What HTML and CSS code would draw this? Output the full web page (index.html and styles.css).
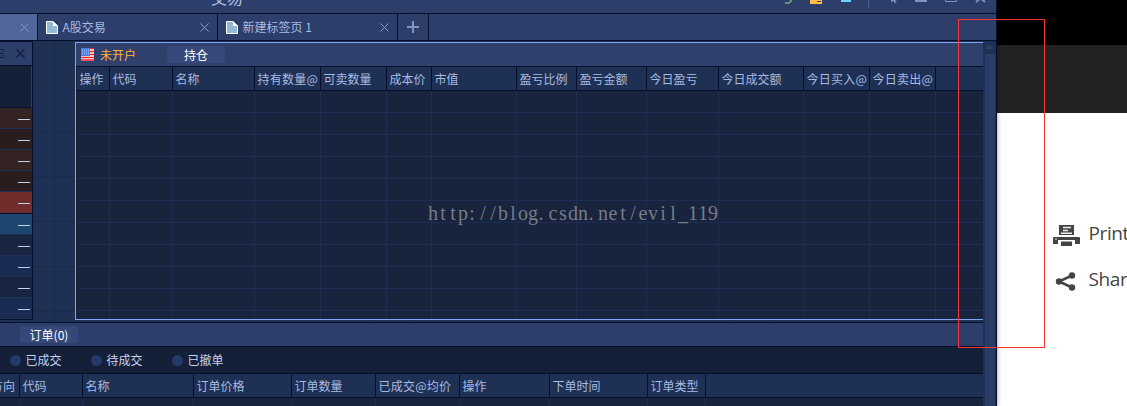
FILE: index.html
```html
<!DOCTYPE html>
<html lang="zh-CN">
<head>
<meta charset="utf-8">
<title>交易</title>
<link rel="stylesheet" href="styles.css">
</head>
<body>
<div class="screen">
  <div class="app">
    <header class="titlebar">
      <span class="app-title">交易</span>
      <svg class="window-tools" width="220" height="10" viewBox="770 0 220 10">
        <path d="M785 3h4l2-2v-1" fill="none" stroke="#6ab77d" stroke-width="1.5"/>
        <path d="M810 0h12v4h-12z" fill="#ffbd45"/><path d="M817 1.500h4" stroke="#2d406b"/>
        <path d="M841 0h10v1.500q0 .5-1 .5h-8q-1 0-1-.5z" fill="#6fcff8"/>
        <path d="M868.500 0v8" stroke="#485b89"/>
        <path d="M891 0h6l-2 1 1.500 2h-2l-1-2-2.500 1z" fill="#7d93c0"/>
        <path d="M915 0h12v2h-12z" fill="#7d93c0"/>
        <path d="M945.500 0v1.500h11v-1.500" fill="none" stroke="#7d93c0"/>
        <path d="M976 2l3-2.500M985 2l-3-2.500" stroke="#7d93c0" stroke-width="2"/>
      </svg>
    </header>
    <nav class="tabs">
      <div class="tab tab-first"><svg class="close" viewBox="0 0 9 9"><path d="M.5 .5l8 8M8.500 .5l-8 8"/></svg></div>
      <div class="tab">
        <svg class="doc" viewBox="0 0 12 13"><path d="M.5 .5h6.500l4.500 4.500v7.500h-11z" fill="#93b8d6" stroke="#fff"/><path d="M7 0v5h5z" fill="#fff"/><path d="M8.500 0l3.500 3.500" stroke="#17233e"/></svg>
        <span class="tab-name">A股交易</span>
        <svg class="close" viewBox="0 0 9 9"><path d="M.5 .5l8 8M8.500 .5l-8 8"/></svg>
      </div>
      <div class="tab">
        <svg class="doc" viewBox="0 0 12 13"><path d="M.5 .5h6.500l4.500 4.500v7.500h-11z" fill="#93b8d6" stroke="#fff"/><path d="M7 0v5h5z" fill="#fff"/><path d="M8.500 0l3.500 3.500" stroke="#17233e"/></svg>
        <span class="tab-name">新建标签页 1</span>
        <svg class="close" viewBox="0 0 9 9"><path d="M.5 .5l8 8M8.500 .5l-8 8"/></svg>
      </div>
      <div class="tab tab-add"><svg width="12" height="12" viewBox="0 0 12 12"><path d="M6 0v12M0 6h12" stroke="#7f95c0" stroke-width="2"/></svg></div>
    </nav>
    <div class="content">
      <main class="workspace">
        <div class="upper">
          <aside class="quotes">
            <div class="quotes-head">
              <svg width="33" height="23" viewBox="0 0 33 23"><path d="M0 7.500h4M0 11.500h3M0 15.500h4M3 9.500h1M3 13.500h1" stroke="#131d35"/><path d="M16.500 7.500l8 8M24.500 7.500l-8 8" stroke="#131d35" stroke-width="1.300"/></svg>
            </div>
            <div class="quotes-gap"></div>
            <div class="quote warm"></div>
            <div class="quote warm-dark"></div>
            <div class="quote warm"></div>
            <div class="quote warm-dark"></div>
            <div class="quote red"></div>
            <div class="quote teal"></div>
            <div class="quote navy"></div>
            <div class="quote blue"></div>
            <div class="quote navy"></div>
            <div class="quote blue"></div>
          </aside>
          <section class="positions">
            <div class="panel-bar">
              <svg class="flag" viewBox="0 0 13 13"><path fill="#fff" d="M0 0h13v13H0z"/><path d="M0 .5h13M0 3.500h13M0 6.500h13M0 9.500h13M0 12h13" stroke="#f01d22" stroke-width="1.500"/><path fill="#3c7de8" d="M0 0h9v8H0z"/><path d="M1 2h8M1 4h8M1 6h8" stroke="#b8d4ff" stroke-dasharray="1 1"/></svg>
              <span class="account">未开户</span>
              <span class="chip">持仓</span>
            </div>
            <div class="cols pos-cols head">
              <span>操作</span><span>代码</span><span>名称</span><span class="at">持有数量@</span><span>可卖数量</span><span>成本价</span><span>市值</span><span>盈亏比例</span><span>盈亏金额</span><span>今日盈亏</span><span>今日成交额</span><span class="at">今日买入@</span><span class="at">今日卖出@</span>
            </div>
            <div class="cols pos-cols rows">
              <span></span><span></span><span></span><span></span><span></span><span></span><span></span><span></span><span></span><span></span><span></span><span></span><span></span>
            </div>
          </section>
        </div>
        <section class="orders">
          <div class="orders-bar"><span class="chip">订单(0)</span></div>
          <div class="filters">
            <label class="filter"><i class="dot"></i>已成交</label>
            <label class="filter"><i class="dot"></i>待成交</label>
            <label class="filter"><i class="dot"></i>已撤单</label>
          </div>
          <div class="cols order-cols head">
            <span class="cut">方向</span><span>代码</span><span>名称</span><span>订单价格</span><span>订单数量</span><span class="at">已成交@均价</span><span>操作</span><span>下单时间</span><span>订单类型</span>
          </div>
          <div class="cols order-cols rows">
            <span></span><span></span><span></span><span></span><span></span><span></span><span></span><span></span><span></span>
          </div>
        </section>
      </main>
      <div class="scroll">
        <svg width="9" height="4" viewBox="0 0 9 4"><path d="M0 4l4.500-4 4.500 4z" fill="#2d406b"/></svg>
        <div class="thumb"></div>
      </div>
    </div>
  </div>
  <div class="page">
    <div class="page-top"></div>
    <div class="page-nav"></div>
    <div class="page-body">
      <div class="action">
        <svg width="27" height="22" viewBox="0 0 27 22" fill="#444"><path d="M6 0h15v10H6z"/><path d="M10 2.500h8M10 5.500h5M8 8.300h11" stroke="#eee" stroke-width="1.400"/><path d="M1 12h25q1 0 1 1v6h-5v-4H5v4H0v-6q0-1 1-1z"/><path d="M2 14h2" stroke="#eee"/><path d="M8 16.500h11v4.500H8z"/></svg>
        <span>Print</span>
      </div>
      <div class="action">
        <svg width="27" height="22" viewBox="0 0 27 22" fill="#444"><path d="M19 4.500L6 10.500 19 16.500" fill="none" stroke="#444" stroke-width="2.500"/><circle cx="6" cy="10.500" r="3.200"/><circle cx="19" cy="4.500" r="3.200"/><circle cx="19" cy="16.500" r="3.200"/></svg>
        <span>Share</span>
      </div>
    </div>
  </div>
  <svg class="watermark" width="300" height="30" viewBox="0 0 300 30">
    <text y="20" x="5 15 25 35 44 55 65 75 85 95 105 113 125 135 145 155 163 175 185 195 205 215 225 235 245 255 265 275 285">http://blog.csdn.net/evil_119</text>
  </svg>
  <div class="highlight"></div>
</div>
</body>
</html>
```
FILE: styles.css
```css
* { box-sizing: border-box; }
body { margin: 0; font: 12px/16px "Noto Sans CJK SC", sans-serif; color: #a9bbe3; }
svg { display: block; flex: none; }
.screen { position: relative; width: 1127px; height: 406px; overflow: hidden; display: flex; background: #fff; }

.app { width: 997px; height: 406px; flex: none; display: flex; flex-direction: column; border-right: 1px solid #050f2c; background: #1e3054; box-shadow: 0 0 5px rgba(0,0,0,.4); z-index: 1; }
.titlebar { height: 14px; flex: none; display: flex; justify-content: space-between; overflow: hidden; padding: 0 6px 0 211px; background: #2c3e69; border-bottom: 1px solid #050f2c; }
.app-title { margin-top: -15px; font-size: 16px; line-height: 24px; color: #b4c4e8; }

.tabs { height: 27px; flex: none; display: flex; background: #2c3e69; border-bottom: 1px solid #050f2c; }
.tab { width: 180px; display: flex; align-items: center; padding: 0 8px; border-right: 1px solid #050f2c; }
.tab-first { width: 38px; justify-content: flex-end; background: #51669a; }
.tab-add { width: 31px; padding: 0; justify-content: center; }
.tab-name { flex: 1; margin-left: 4.5px; white-space: nowrap; }
.doc { width: 12px; height: 13px; }
.close { width: 9px; height: 9px; fill: none; stroke: #8599c6; stroke-width: 1; }

.content { flex: 1; display: flex; min-height: 0; }
.workspace { width: 983px; flex: none; display: flex; flex-direction: column; }
.upper { height: 281px; flex: none; display: flex; align-items: flex-start; background:
  repeating-linear-gradient(to right, transparent 0 9px, #1b2b4d 9px 10px, transparent 10px 45px),
  repeating-linear-gradient(to bottom, transparent 0 45px, #1b2b4d 45px 46px, transparent 46px 90px, #1b2b4d 90px 91px, transparent 91px 135px, #1b2b4d 135px 136px, transparent 136px 180px, #1b2b4d 180px 181px, transparent 181px 225px, #1b2b4d 225px 226px, transparent 226px 270px, #1b2b4d 270px 271px, transparent 271px 300px), #1e3054; }
.quotes { width: 33px; height: 279px; flex: none; border-top: 1px solid #050f2c; border-right: 1px solid #050f2c; border-bottom: 1px solid #050f2c; background: #050f2c; overflow: hidden; }
.quotes-head { height: 24px; background: #2c3e69; border-bottom: 1px solid #050f2c; overflow: hidden; }
.quotes-gap { height: 42px; background: #142038; border-right: 1px solid #2c3e69; border-bottom: 1px solid #050f2c; }
.quote { height: 21px; padding: 11px 2px 0 18px; border-bottom: 1px solid #203158; }
.quote::before { content: ""; display: block; height: 1px; background: #c3cfef; }
.warm { background: #332323; }
.warm-dark { background: #2a1d1e; }
.red { height: 22px; background: #6f2c2b; border-bottom-color: #050f2c; }
.teal { background: #1c466e; }
.navy { background: #172541; }
.blue { background: #192b53; }

.positions { width: 908px; height: 278px; margin: 1px 0 0 42px; border: 1px solid #7fa3f9; border-right: 0; display: flex; flex-direction: column; background: #18233e; }
.panel-bar { height: 24px; flex: none; display: flex; align-items: center; padding-left: 5px; background: #30406d; border-bottom: 1px solid #050f2c; }
.flag { width: 13px; height: 13px; }
.account { width: 67px; margin-left: 6px; color: #ffb637; }
.chip { width: 58px; height: 17px; line-height: 17px; border-radius: 2px; text-align: center; color: #fff; background: #354879; }

.cols { display: grid; margin-left: 1px; }
.pos-cols { grid-template-columns: 33px 63px 82px 66px 66px 45px 85px 60px 70px 72px 85px 66px 66px 1fr; }
.order-cols { grid-template-columns: 20px 63px 111px 98px 84px 84px 90px 98px 58px 1fr; margin-left: 0; }
.cols span { white-space: nowrap; border-right: 1px solid #1e2c54; }
.head { height: 24px; flex: none; background: #1e3054; border-bottom: 1px solid #050f2c; line-height: 23px; }
.head span { padding-left: 2.5px; border-right-color: #050f2c; overflow: hidden; }
.head .at { letter-spacing: .25px; }
.head .cut { padding: 0; text-indent: -9px; }
.rows { flex: 1; background: repeating-linear-gradient(to bottom, transparent 0 21px, #1e2c54 21px 22px) #18233e; }

.orders { flex: 1; display: flex; flex-direction: column; border-top: 1px solid #050f2c; background: #18233e; min-height: 0; }
.orders-bar { height: 24px; flex: none; display: flex; padding: 3px 0 0 20px; background: #2c3e69; border-bottom: 1px solid #050f2c; }
.filters { height: 27px; flex: none; display: flex; align-items: center; padding-left: 10px; background: #142038; border-bottom: 1px solid #050f2c; color: #c6d3f3; }
.filter { width: 81px; display: flex; align-items: center; gap: 4.5px; }
.dot { width: 11px; height: 11px; border-radius: 50%; background: #243a68; }

.scroll { width: 13px; display: flex; flex-direction: column; align-items: center; padding-top: 4px; }
.thumb { width: 10px; flex: 1; margin-top: 5px; background: #2a3b67; }

.page { flex: 1; display: flex; flex-direction: column; }
.page-top { height: 45px; background: #000; }
.page-nav { height: 68px; background: #222; }
.page-body { flex: 1; padding: 97px 0 0 56px; overflow: hidden; }
.action { height: 46px; display: flex; align-items: center; gap: 8.5px; font: 19px/24px "Open Sans", sans-serif; color: #444; letter-spacing: -.4px; }
.action svg { margin-top: 5px; }

.watermark { position: absolute; left: 428px; top: 200px; z-index: 2; }
.watermark text { font: 20px "Liberation Serif", serif; text-anchor: middle; fill: #777c85; }
.highlight { position: absolute; left: 958px; top: 19px; width: 87px; height: 329px; border: 1px solid #f93434; z-index: 3; }
```
